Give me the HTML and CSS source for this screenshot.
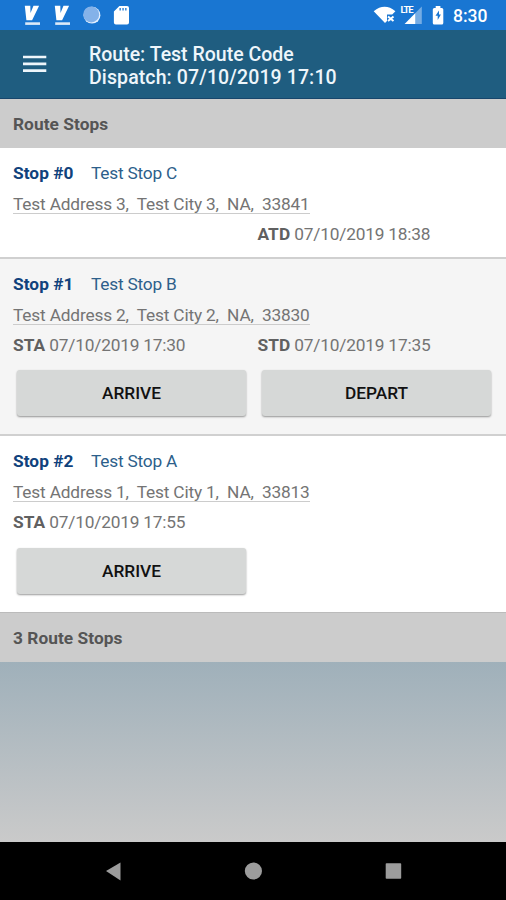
FILE: index.html
```html
<!DOCTYPE html>
<html lang="en">
<head>
<meta charset="utf-8">
<title>Route Stops</title>
<link rel="stylesheet" href="styles.css">
</head>
<body>
<div class="status">
  <svg class="status-icons" width="506" height="30" viewBox="0 0 506 30" fill="#fff">
    <g id="v"><path d="M24.8 5.7h5.5l.2 7.2 3-7.2h5.6l-7 14.6h-5.7z"/><path d="M25.2 22.3h14.8v2.6H25.2z" opacity=".85"/></g>
    <use href="#v" x="30"/>
    <circle cx="92" cy="15.2" r="8.4" fill="#e4f0ff"/>
    <circle cx="91.2" cy="14.4" r="8" fill="#84b2e9"/>
    <path fill-rule="evenodd" d="M119.4 6H127q2 0 2 2v14.4q0 2-2 2h-11.1q-2 0-2-2V11.6zM119.5 8v2.5h1.3V8zM122.4 8v2.5h1.3V8zM125.2 8v2.500h1.300V8z"/>
    <path d="M373.7 11.200q11-8.800 21.700 0l-3.200 3.300H387v6.600l-2 2z"/>
    <path d="m388 16.500 5.500 4.500m0-4.500-5.500 4.500" stroke="#fff" stroke-width="2"/>
    <path d="M421.800 6.600v17.300h-6.400V13z" opacity=".4"/>
    <path d="M415.400 13v10.900h-10.800z"/>
    <path fill-rule="evenodd" d="M435.700 6h4.700v2h1.400q1.500 0 1.500 1.500V23q0 1.500-1.500 1.500h-7.500q-1.500 0-1.500-1.500V9.500q0-1.500 1.500-1.500h1.400zM439 10.500l-3.500 5.300h2.200v4.200l3.200-5.500h-1.900z"/>
  </svg>
  <span class="lte">LTE</span>
  <span class="clock">8:30</span>
</div>
<header class="appbar">
  <svg class="menu" width="24" height="18" viewBox="0 0 24 18"><path d="M0 2h23.3M0 8.800h23.300M0 15.600h23.300" stroke="#eef6fb" stroke-width="2.7"/></svg>
  <div class="title"><div class="route">Route: Test Route Code</div><div class="dispatch">Dispatch: 07/10/2019 17:10</div></div>
</header>
<main>
  <div class="band">Route Stops</div>
  <section class="stop">
    <div class="name"><b>Stop #0</b><span>Test Stop C</span></div>
    <div class="line"><span class="address">Test Address 3,&nbsp; Test City 3,&nbsp; NA,&nbsp; 33841</span></div>
    <div class="times"><div></div><div><b>ATD</b> 07/10/2019 18:38</div></div>
  </section>
  <section class="stop alt">
    <div class="name"><b>Stop #1</b><span>Test Stop B</span></div>
    <div class="line"><span class="address">Test Address 2,&nbsp; Test City 2,&nbsp; NA,&nbsp; 33830</span></div>
    <div class="times"><div><b>STA</b> 07/10/2019 17:30</div><div><b>STD</b> 07/10/2019 17:35</div></div>
    <div class="actions"><button>ARRIVE</button><button>DEPART</button></div>
  </section>
  <section class="stop last">
    <div class="name"><b>Stop #2</b><span>Test Stop A</span></div>
    <div class="line"><span class="address">Test Address 1,&nbsp; Test City 1,&nbsp; NA,&nbsp; 33813</span></div>
    <div class="times"><div><b>STA</b> 07/10/2019 17:55</div><div></div></div>
    <div class="actions"><button>ARRIVE</button></div>
  </section>
  <div class="band footer">3 Route Stops</div>
</main>
<nav>
  <svg width="506" height="58" viewBox="0 0 506 58" fill="#9c9c9c"><path d="M106 29 120.5 20.5v18z"/><circle cx="253.4" cy="29" r="8.6"/><rect x="385.7" y="21.2" width="15.5" height="15.5" rx=".8"/></svg>
</nav>
</body>
</html>
```
FILE: styles.css
```css
* { box-sizing: border-box; }
body {
  margin: 0;
  width: 506px;
  height: 900px;
  overflow: hidden;
  display: flex;
  flex-direction: column;
  font-family: Roboto, sans-serif;
  font-size: 17.3px;
  color: #747474;
}
.status { position: relative; height: 30px; flex: none; background: #1976d2; color: #fff; }
.status-icons { display: block; }
.lte { position: absolute; left: 400.5px; top: 5px; font-size: 9.5px; line-height: 10px; font-weight: 700; letter-spacing: -1.1px; }
.clock { position: absolute; left: 453px; top: 5px; font-size: 17.5px; line-height: 22px; font-weight: 500; }
.appbar {
  height: 69px;
  flex: none;
  display: flex;
  align-items: flex-start;
  padding: 13px 0 0 23px;
  background: #1f5d80;
  border-bottom: 1px solid #17466c;
  color: #eef6fb;
}
.menu { margin: 12px 42px 0 0; }
.title { font-size: 19.5px; line-height: 23px; font-weight: 500; white-space: nowrap; }
.dispatch { letter-spacing: .11px; }
main { flex: 1; background: linear-gradient(#9fb0ba 75.6%, #cacaca 100%); }
.band {
  height: 49px;
  padding: 0 13px;
  line-height: 51px;
  background: #ccc;
  color: #555;
  font-weight: 700;
  letter-spacing: .05px;
}
.stop { padding: 10px 13px 7px; border-bottom: 2px solid #d0d0d0; background: #fff; height: 111px; letter-spacing: -.2px; }
.stop:has(.actions) { height: 177px; }
.stop b { letter-spacing: .05px; }
.alt { background: #f5f5f5; }
.last { border-bottom: 1px solid #bbb; }
.name { height: 31px; line-height: 31px; display: flex; color: #2d5f8b; }
.name b { width: 78px; color: #10427c; }
.line { height: 30px; line-height: 31px; }
.address { display: inline-block; line-height: 20px; height: 20px; border-bottom: 1px solid #ccc; white-space: nowrap; letter-spacing: -.17px; }
.times { display: grid; grid-template-columns: 244.5px 1fr; height: 31px; line-height: 31px; }
.times b { color: #606060; }
.actions { display: grid; grid-template-columns: 229px 229px; gap: 16px; padding: 9px 0 0 4px; }
.last .actions { padding-top: 10px; }
button {
  height: 46px;
  border: 0;
  border-radius: 3px;
  background: #d6d8d7;
  box-shadow: 0 1px 2px #0006;
  font: 500 17.3px Roboto, sans-serif;
  color: #111;
}
nav { height: 58px; flex: none; background: #000; }
nav svg { display: block; }
```
